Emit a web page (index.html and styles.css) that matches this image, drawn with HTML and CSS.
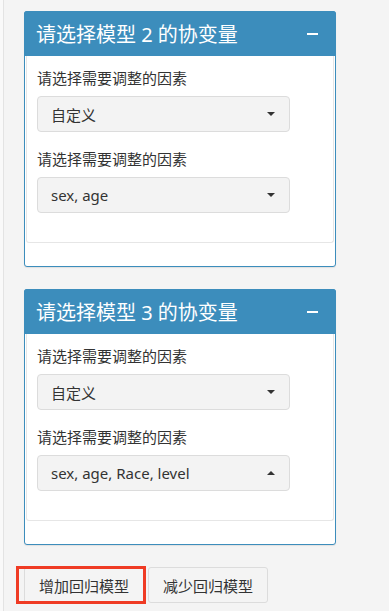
FILE: index.html
```html
<!DOCTYPE html>
<html lang="zh-CN">
<head>
    <meta charset="UTF-8">
    <meta name="viewport" content="width=device-width, initial-scale=1.0">
    <title>协变量设置</title>
    <link rel="stylesheet" href="styles.css">
</head>
<body>
    <div class="page">
        <!-- 模型 2 -->
        <div class="box">
            <div class="box-header">
                <h3 class="box-title">请选择模型 2 的协变量</h3>
                <span class="box-tool"></span>
            </div>
            <div class="box-body">
                <div class="form-group">
                    <label>请选择需要调整的因素</label>
                    <div class="select">
                        <span>自定义</span>
                        <span class="caret"></span>
                    </div>
                </div>
                <div class="form-group">
                    <label>请选择需要调整的因素</label>
                    <div class="select">
                        <span>sex, age</span>
                        <span class="caret"></span>
                    </div>
                </div>
            </div>
            <div class="box-footer"></div>
        </div>

        <!-- 模型 3 -->
        <div class="box">
            <div class="box-header">
                <h3 class="box-title">请选择模型 3 的协变量</h3>
                <span class="box-tool"></span>
            </div>
            <div class="box-body">
                <div class="form-group">
                    <label>请选择需要调整的因素</label>
                    <div class="select">
                        <span>自定义</span>
                        <span class="caret"></span>
                    </div>
                </div>
                <div class="form-group">
                    <label>请选择需要调整的因素</label>
                    <div class="select open">
                        <span>sex, age, Race, level</span>
                        <span class="caret"></span>
                    </div>
                </div>
            </div>
            <div class="box-footer"></div>
        </div>

        <div class="actions">
            <button class="btn marked">增加回归模型</button>
            <button class="btn">减少回归模型</button>
        </div>
    </div>
</body>
</html>
```

FILE: styles.css
```css
* {
    margin: 0;
    padding: 0;
    box-sizing: border-box;
}

body {
    font-family: "Noto Sans", "Noto Sans CJK SC", sans-serif;
    background: #f9f9f9;
    color: #333;
    overflow: hidden;
}

.page {
    margin-left: 3px;
    border-left: 1px solid #e3e3e3;
    background: #f4f4f4;
    min-height: 100vh;
    padding: 11px 0 0 20px;
}

.box {
    width: 312px;
    background: white;
    border: 1px solid #3c8dbc;
    border-radius: 3px;
    margin-bottom: 22px;
    box-shadow: 0 1px 1px rgba(0,0,0,0.08);
}

.box-header {
    background: #3c8dbc;
    height: 45px;
    margin: -1px -1px 0;
    border-radius: 3px 3px 0 0;
    padding: 0 18px 0 12px;
    display: flex;
    align-items: center;
    justify-content: space-between;
}

.box-title {
    color: white;
    font-size: 20px;
    font-weight: normal;
}

.box-tool {
    width: 11px;
    height: 2px;
    background: white;
}

.box-body {
    padding: 12px 10px 12px;
    margin: 0 1px;
    border: 1px solid #e6e6e6;
    border-top: none;
    border-radius: 0 0 3px 3px;
}

.form-group {
    margin-bottom: 17px;
}

.form-group label {
    display: block;
    font-size: 15px;
    line-height: 21px;
    margin-bottom: 7px;
}

.select {
    width: 253px;
    height: 36px;
    background: #f3f3f3;
    border: 1px solid #dcdcdc;
    border-radius: 4px;
    padding: 0 14px 0 13px;
    display: flex;
    align-items: center;
    justify-content: space-between;
    font-size: 15px;
    color: #333;
}

.caret {
    width: 0;
    height: 0;
    border-left: 4px solid transparent;
    border-right: 4px solid transparent;
    border-top: 4px solid #333;
}

.select.open .caret {
    border-top: none;
    border-bottom: 4px solid #333;
}

.box-footer {
    height: 23px;
}

.actions {
    display: flex;
    gap: 4px;
    margin-top: 1px;
}

.btn {
    height: 36px;
    padding: 0 14px;
    background: #f4f4f4;
    border: 1px solid #dcdcdc;
    border-radius: 3px;
    font-family: inherit;
    font-size: 15px;
    color: #333;
    position: relative;
}

/* 红框标注 */
.btn.marked::after {
    content: "";
    position: absolute;
    left: -9px;
    right: -3px;
    top: -2px;
    bottom: -2px;
    border: 3px solid #ef3b24;
}
```
